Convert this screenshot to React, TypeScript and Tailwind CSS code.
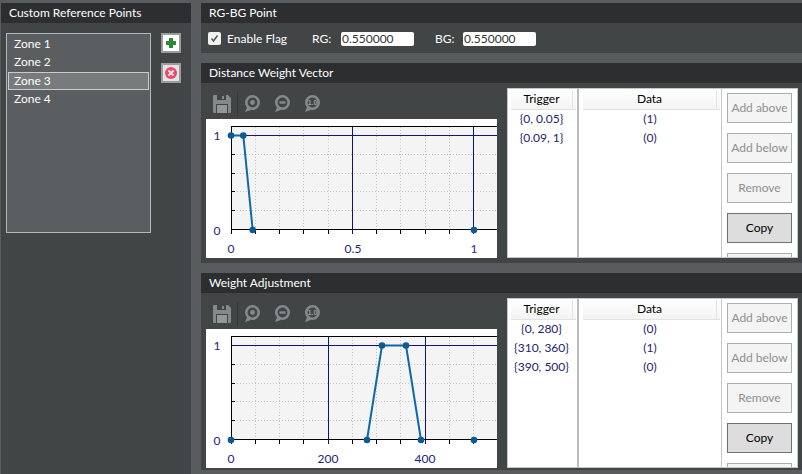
const F = { fontFamily: 'Lato, sans-serif' };

function Title({ children }: { children: string }) {
  return (
    <div className="h-5 shrink-0 bg-[#2c2e30] pl-2 text-xs leading-5 text-white">{children}</div>
  );
}

function ToolIcon({ kind }: { kind: "in" | "out" | "one" }) {
  return (
    <svg width="16" height="18" viewBox="0 0 16 18" className="block">
      <circle cx="8.5" cy="7.5" r="6.2" fill="none" stroke="#85898a" strokeWidth="2.6" />
      <path d="M3.5 11 L1 17 L7 15 Z" fill="#85898a" />
      {kind === "in" && <circle cx="8.5" cy="7.5" r="2.4" fill="#85898a" />}
      {kind === "out" && <rect x="5.5" y="6.3" width="6" height="2.4" fill="#85898a" />}
      {kind === "one" && (
        <text x="8.5" y="10" textAnchor="middle" fontSize="7" fontWeight="700" fill="#9a9e9f" style={{ fontFamily: '"Liberation Sans", sans-serif' }}>1.0</text>
      )}
    </svg>
  );
}

function Toolbar() {
  return (
    <div className="flex h-[31px] items-center pl-[7px]">
      <svg width="18" height="18" viewBox="0 0 18 18" className="block">
        <path d="M1 0 H15 L18 3 V17 Q18 18 17 18 H1 Q0 18 0 17 V1 Q0 0 1 0 Z" fill="#85898a" />
        <rect x="4" y="0" width="9" height="5" fill="#414546" />
        <rect x="9" y="1" width="2" height="3" fill="#85898a" />
        <rect x="3" y="9" width="12" height="9" fill="#414546" />
        <rect x="4" y="10" width="10" height="8" fill="#939798" />
      </svg>
      <div className="ml-[6px] mr-[6px] h-6 w-px bg-[#353839]" />
      <div className="flex gap-[14px]">
        <ToolIcon kind="in" />
        <ToolIcon kind="out" />
        <ToolIcon kind="one" />
      </div>
    </div>
  );
}

type Pt = [number, number];

function Chart({ pts, line, xlabels, vlines }: { pts: Pt[]; line: Pt[]; xlabels: [number, string, string][]; vlines: number[] }) {
  const W = 291;
  const H = 139;
  const ticks = [49, 73, 97, 122, 146, 170, 194, 219, 243, 267];
  const left = 25;
  return (
    <svg width={W} height={H} className="block bg-white" style={F}>
      <rect x={left} y={7} width={W - left} height={103} fill="#f4f4f5" />
      {ticks.map((g) => (
        <line key={g} x1={g + 0.5} x2={g + 0.5} y1={8} y2={110} stroke="#c4c4c4" strokeDasharray="1 2" />
      ))}
      {[35, 54, 72, 91].map((y) => (
        <line key={y} x1={left} x2={W} y1={y + 0.5} y2={y + 0.5} stroke="#c4c4c4" strokeDasharray="1 2" />
      ))}
      {vlines.map((v) => (
        <line key={v} x1={v + 0.5} x2={v + 0.5} y1={7} y2={115} stroke="#14146e" />
      ))}
      <line x1={left} x2={W} y1={16.5} y2={16.5} stroke="#14146e" />
      <line x1={left} x2={W} y1={7.5} y2={7.5} stroke="#000" />
      <line x1={left} x2={W} y1={110.5} y2={110.5} stroke="#000" />
      <line x1={25.5} x2={25.5} y1={7} y2={115} stroke="#000" />
      {ticks.filter((t) => !vlines.includes(t)).map((t) => (
        <line key={t} x1={t + 0.5} x2={t + 0.5} y1={110} y2={115} stroke="#000" />
      ))}
      {[35, 54, 72, 91].map((y) => (
        <line key={y} x1={25} x2={29} y1={y + 0.5} y2={y + 0.5} stroke="#000" />
      ))}
      <polyline points={line.map((p) => p.join(",")).join(" ")} fill="none" stroke="#0f67ab" strokeWidth="2" />
      {pts.map((p, i) => (
        <circle key={i} cx={p[0]} cy={p[1]} r="3.3" fill="#0b5a94" />
      ))}
      <text x={11} y={21} textAnchor="middle" fontSize="12" fill="#1e1e78">1</text>
      <text x={11} y={116} textAnchor="middle" fontSize="12" fill="#1e1e78">0</text>
      {xlabels.map(([x, s, c]) => (
        <text key={s} x={x} y={134} textAnchor="middle" fontSize="12" fill={c}>{s}</text>
      ))}
    </svg>
  );
}

function Btn({ children, active }: { children?: string; active?: boolean }) {
  return (
    <div
      className={
        active
          ? "flex h-[30px] w-[65px] shrink-0 items-center justify-center border border-[#707070] bg-[#dddddd] text-xs text-black"
          : "flex h-[30px] w-[65px] shrink-0 items-center justify-center border border-[#adadad] bg-[#f4f4f4] text-xs text-[#8f8f8f]"
      }
    >
      {children}
    </div>
  );
}

function HeaderCell({ label }: { label: string }) {
  return (
    <div className="flex h-[20px] border-b border-[#e2e2e2] bg-gradient-to-b from-white to-[#f3f3f3] pr-[3px] text-black">
      <div className="flex-1 border-r border-[#e4e4e4] text-center leading-[17px]">{label}</div>
    </div>
  );
}

function Table({ rows }: { rows: [string, string][] }) {
  return (
    <div className="flex h-[170px] w-[291px] shrink-0 overflow-hidden border border-[#c4c6c8] bg-white text-xs">
      <div className="w-[71px] shrink-0 border-r-2 border-[#b9bcbe] pl-[3px] pt-px">
        <div className="w-[65px]">
          <HeaderCell label="Trigger" />
          {rows.map((r) => (
            <div key={r[0]} className="h-[19px] w-[61px] whitespace-nowrap text-center leading-[17px] text-[#23236e]">{r[0]}</div>
          ))}
        </div>
      </div>
      <div className="w-[143px] shrink-0 border-r border-[#c4c6c8] pl-[4px] pt-px">
        <div className="w-[137px]">
          <HeaderCell label="Data" />
          {rows.map((r, i) => (
            <div key={i} className="h-[19px] w-[134px] text-center leading-[17px] text-[#23236e]">{r[1]}</div>
          ))}
        </div>
      </div>
      <div className="flex flex-1 flex-col gap-[10px] pl-[5px] pt-[4px]">
        <Btn>Add above</Btn>
        <Btn>Add below</Btn>
        <Btn>Remove</Btn>
        <Btn active>Copy</Btn>
        <Btn />
      </div>
    </div>
  );
}

function VectorPanel(p: { title: string; tall?: boolean; pts: Pt[]; line: Pt[]; xlabels: [number, string, string][]; vlines: number[]; rows: [string, string][] }) {
  return (
    <section className={p.tall ? "flex h-[200px] shrink-0 flex-col bg-[#414546]" : "flex h-[197px] shrink-0 flex-col bg-[#414546]"}>
      <Title>{p.title}</Title>
      <div className="flex gap-[10px] pl-[5px] pt-[5px]">
        <div>
          <Toolbar />
          <Chart pts={p.pts} line={p.line} xlabels={p.xlabels} vlines={p.vlines} />
        </div>
        <Table rows={p.rows} />
      </div>
    </section>
  );
}

export default function App() {
  return (
    <div className="flex h-[474px] w-[802px] gap-[10px] overflow-hidden bg-[#595c5e] pl-px pt-[3px]" style={F}>
      <aside className="flex h-[471px] w-[190px] shrink-0 flex-col bg-[#414546]">
        <Title>Custom Reference Points</Title>
        <div className="flex pl-[5px] pt-[10px]">
          <div className="h-[200px] w-[145px] border border-[#b4b7b8] bg-[#5a5e60] px-px pt-px text-xs text-white">
            {["Zone 1", "Zone 2", "Zone 3", "Zone 4"].map((z) => (
              <div
                key={z}
                className={z === "Zone 3" ? "mt-px h-[18px] border border-[#c9cbcc] bg-[#777b7b] pl-[5px] leading-[16px]" : "h-[18px] pl-[6px] leading-[18px]"}
              >
                {z}
              </div>
            ))}
          </div>
          <div className="ml-[10px] flex flex-col gap-[10px]">
            <div className="flex h-5 w-5 items-center justify-center border-2 border-[#9b9d9d] bg-white">
              <svg width="10" height="10" viewBox="0 0 10 10"><path d="M3 0H7V3H10V7H7V10H3V7H0V3H3Z" fill="#2f8a2f" /></svg>
            </div>
            <div className="flex h-5 w-5 items-center justify-center border-2 border-[#9b9d9d] bg-[#e4e4e4]">
              <svg width="12" height="12" viewBox="0 0 12 12">
                <circle cx="6" cy="6" r="6" fill="#e64c6e" />
                <path d="M3.5 3.5 L8.5 8.5 M8.5 3.5 L3.5 8.5" stroke="#e4e4e4" strokeWidth="2" />
              </svg>
            </div>
          </div>
        </div>
      </aside>
      <main className="flex min-w-0 flex-1 flex-col gap-[10px]">
        <section className="h-[50px] shrink-0 bg-[#414546]">
          <Title>RG-BG Point</Title>
          <div className="flex h-[30px] items-center pl-[7px] pt-px text-xs text-white">
            <div className="flex h-[13px] w-[13px] items-center justify-center rounded-[2px] bg-[#f2f2f2]">
              <svg width="9" height="9" viewBox="0 0 9 9"><path d="M1.5 4.5 L3.5 7 L7.5 1.5" fill="none" stroke="#555" strokeWidth="1.5" /></svg>
            </div>
            <span className="ml-[6px] w-[85px]">Enable Flag</span>
            <span className="w-[29px]">RG:</span>
            <div className="h-[14px] w-[73px] rounded-[2px] bg-white pl-px leading-[14px] text-[#333]">0.550000</div>
            <span className="ml-[21px] w-[28px]">BG:</span>
            <div className="h-[14px] w-[73px] rounded-[2px] bg-white pl-px leading-[14px] text-[#333]">0.550000</div>
          </div>
        </section>
        <VectorPanel
          title="Distance Weight Vector"
          tall
          vlines={[146, 267]}
          pts={[[25, 16.5], [37.3, 16.5], [46.7, 111], [268, 111]]}
          line={[[25, 16.5], [37.3, 16.5], [46.7, 111]]}
          xlabels={[[25, "0", "#1e1e78"], [147, "0.5", "#1e1e78"], [268, "1", "#4b1a86"]]}
          rows={[["{0, 0.05}", "(1)"], ["{0.09, 1}", "(0)"]]}
        />
        <VectorPanel
          title="Weight Adjustment"
          vlines={[122, 219]}
          pts={[[25, 111], [161, 111], [176, 16.5], [200, 16.5], [215, 111], [268, 111]]}
          line={[[161, 111], [176, 16.5], [200, 16.5], [215, 111]]}
          xlabels={[[25, "0", "#1e1e78"], [122, "200", "#1e1e78"], [219, "400", "#1e1e78"]]}
          rows={[["{0, 280}", "(0)"], ["{310, 360}", "(1)"], ["{390, 500}", "(0)"]]}
        />
      </main>
    </div>
  );
}
